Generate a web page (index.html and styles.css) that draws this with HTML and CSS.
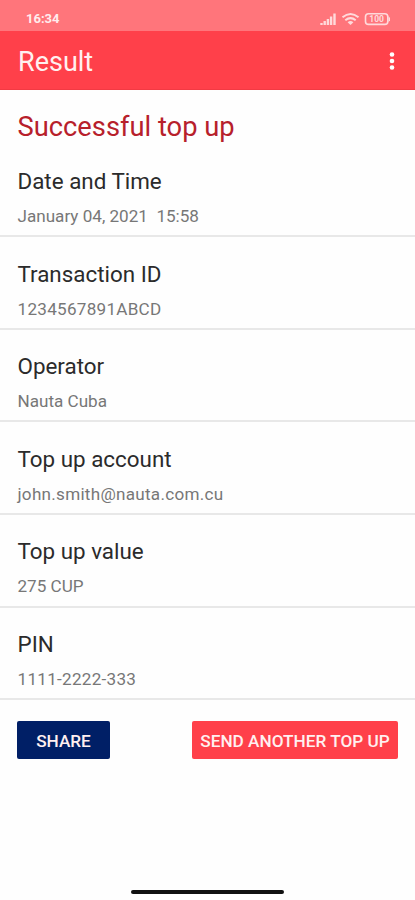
FILE: index.html
```html
<!DOCTYPE html>
<html lang="en">
<head>
<meta charset="utf-8">
<title>Result</title>
<link rel="stylesheet" href="styles.css">
</head>
<body>
<div class="status">
  <span class="clock">16:34</span>
  <svg class="status-icons" width="70" height="14" viewBox="0 0 70 14" fill="none" stroke="#ffdadb">
    <g stroke-width="2.400"><path d="M1.500 13v-2M4.700 13v-4M7.900 13v-6M11.100 13v-8.500M14.500 13v-11.500"/></g>
    <g stroke-width="2"><path d="M22.500 5.300Q30.500-1.200 38.500 5.300M25.300 8.300Q30.500 4 35.700 8.300"/></g>
    <path d="M27.600 10.200Q30.500 7.800 33.400 10.200L30.500 13z" fill="#ffdadb" stroke="none"/>
    <rect x="45.500" y="1.800" width="22.300" height="10.600" rx="3" stroke-width="1.600"/>
    <path d="M68.500 4l2.400 3.100-2.400 3.100z" fill="#ffdadb" stroke="none"/>
    <text class="charge" x="56.600" y="10.200" text-anchor="middle">100</text>
  </svg>
</div>
<header class="bar">
  <h1>Result</h1>
  <svg class="more" width="6" height="20" viewBox="0 0 6 20" fill="#fff"><circle cx="3" cy="3.500" r="2.300"/><circle cx="3" cy="10" r="2.300"/><circle cx="3" cy="16.500" r="2.300"/></svg>
</header>
<main>
  <h2>Successful top up</h2>
  <section class="row"><h3>Date and Time</h3><p>January 04, 2021&nbsp; 15:58</p></section>
  <section class="row"><h3>Transaction ID</h3><p class="wide">1234567891ABCD</p></section>
  <section class="row"><h3>Operator</h3><p>Nauta Cuba</p></section>
  <section class="row"><h3>Top up account</h3><p class="wide">john.smith@nauta.com.cu</p></section>
  <section class="row"><h3>Top up value</h3><p>275 CUP</p></section>
  <section class="row"><h3>PIN</h3><p class="wide">1111-2222-333</p></section>
  <div class="actions">
    <button class="share">SHARE</button>
    <button class="send">SEND ANOTHER TOP UP</button>
  </div>
</main>
<div class="home"></div>
</body>
</html>
```
FILE: styles.css
```css
* { box-sizing: border-box; margin: 0; padding: 0; }
body {
  height: 900px;
  display: flex;
  flex-direction: column;
  background: #fefefe;
  font-family: Roboto, "Liberation Sans", sans-serif;
  overflow: hidden;
}
.status {
  height: 31px;
  padding: 6px 23px 0 26px;
  display: flex;
  align-items: center;
  justify-content: space-between;
  background: #ff757b;
  color: #ffeced;
}
.clock { font-size: 13px; font-weight: 700; }
.status-icons { display: block; margin-right: 2px; }
.charge { font-size: 8.5px; font-weight: 700; fill: #ffdadb; stroke: none; }
.bar {
  height: 59px;
  padding: 0 20px 0 18px;
  display: flex;
  align-items: center;
  justify-content: space-between;
  background: #ff404a;
  border-bottom: 1px solid #f23a43;
  color: #fff0f0;
}
.bar h1 { font-size: 27px; font-weight: 400; line-height: 32px; padding-top: 4px; }
.more { margin-top: 2px; }
h2 {
  height: 54.6px;
  padding: 21px 17.5px 0;
  font-size: 27.3px;
  font-weight: 400;
  line-height: 32px;
  color: #b7202b;
}
.row {
  height: 92.6px;
  padding: 23.5px 17.5px 0;
  border-bottom: 2px solid #e8e8e8;
}
.row h3 { font-size: 22.4px; font-weight: 400; line-height: 26px; color: #2b2b2b; }
.row p { margin-top: 12px; font-size: 17.1px; line-height: 20px; color: #777; white-space: nowrap; }
.row .wide { letter-spacing: 0.27px; }
.actions {
  padding: 21px 17px 0;
  display: flex;
  justify-content: space-between;
}
button {
  height: 38px;
  border: 0;
  border-radius: 2px;
  padding-top: 1px;
  font: 500 17.2px/38px Roboto, "Liberation Sans", sans-serif;
  color: #fff0f0;
  white-space: nowrap;
}
.share { width: 93px; background: #001f66; }
.send { width: 206px; background: #ff404a; }
.home { width: 153px; height: 4px; margin: auto auto 6px; border-radius: 2px; background: #111; }
```
